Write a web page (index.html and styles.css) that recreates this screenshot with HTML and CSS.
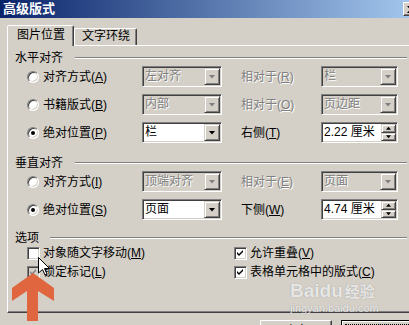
FILE: index.html
```html
<!DOCTYPE html>
<html lang="zh-CN">
<head>
    <meta charset="UTF-8">
    <meta name="viewport" content="width=device-width, initial-scale=1.0">
    <title>高级版式</title>
    <link rel="stylesheet" href="styles.css">
</head>
<body>
<div class="window">
    <div class="titlebar">
        <span class="title">高级版式</span>
        <span class="close-btn">
            <svg width="8" height="7" viewBox="0 0 8 7"><path d="M0 0h2l2 2 2-2h2L5 3.5 8 7H6L4 5 2 7H0l3-3.5z" fill="#000"/></svg>
        </span>
    </div>

    <div class="dialog">
        <div class="tabs">
            <div class="tab active">图片位置</div>
            <div class="tab">文字环绕</div>
        </div>

        <div class="panel">
            <!-- 水平对齐 -->
            <div class="group">
                <div class="group-head"><span>水平对齐</span><i class="etch"></i></div>
                <div class="pos-grid">
                    <label class="opt"><span class="radio"></span><span>对齐方式(<u>A</u>)</span></label>
                    <div class="combo combo-main disabled"><span class="val">左对齐</span><span class="drop"></span></div>
                    <span class="rel disabled">相对于(<u>R</u>)</span>
                    <div class="combo combo-rel disabled"><span class="val">栏</span><span class="drop"></span></div>

                    <label class="opt"><span class="radio"></span><span>书籍版式(<u>B</u>)</span></label>
                    <div class="combo combo-main disabled"><span class="val">内部</span><span class="drop"></span></div>
                    <span class="rel disabled">相对于(<u>O</u>)</span>
                    <div class="combo combo-rel disabled"><span class="val">页边距</span><span class="drop"></span></div>

                    <label class="opt"><span class="radio on"></span><span>绝对位置(<u>P</u>)</span></label>
                    <div class="combo combo-main"><span class="val">栏</span><span class="drop"></span></div>
                    <span class="rel">右侧(<u>T</u>)</span>
                    <div class="combo combo-rel"><span class="val">2.22 厘米</span><span class="spin"><i class="up"></i><i class="dn"></i></span></div>
                </div>
            </div>

            <!-- 垂直对齐 -->
            <div class="group group-v">
                <div class="group-head"><span>垂直对齐</span><i class="etch"></i></div>
                <div class="pos-grid">
                    <label class="opt"><span class="radio"></span><span>对齐方式(<u>I</u>)</span></label>
                    <div class="combo combo-main disabled"><span class="val">顶端对齐</span><span class="drop"></span></div>
                    <span class="rel disabled">相对于(<u>E</u>)</span>
                    <div class="combo combo-rel disabled"><span class="val">页面</span><span class="drop"></span></div>

                    <label class="opt"><span class="radio on"></span><span>绝对位置(<u>S</u>)</span></label>
                    <div class="combo combo-main"><span class="val">页面</span><span class="drop"></span></div>
                    <span class="rel">下侧(<u>W</u>)</span>
                    <div class="combo combo-rel"><span class="val">4.74 厘米</span><span class="spin"><i class="up"></i><i class="dn"></i></span></div>
                </div>
            </div>

            <!-- 选项 -->
            <div class="group group-o">
                <div class="group-head"><span>选项</span><i class="etch"></i></div>
                <div class="check-grid">
                    <label class="opt opt-c"><span class="check"></span><span>对象随文字移动(<u>M</u>)</span></label>
                    <label class="opt opt-c"><span class="check"><svg width="7" height="7" viewBox="0 0 7 7"><path d="M0 2l2 2 4-4v2L2 6 0 4z" fill="#000"/></svg></span><span>允许重叠(<u>V</u>)</span></label>
                    <label class="opt opt-c"><span class="check grey"><svg width="7" height="7" viewBox="0 0 7 7"><path d="M0 2l2 2 4-4v2L2 6 0 4z" fill="#808080"/></svg></span><span>锁定标记(<u>L</u>)</span></label>
                    <label class="opt opt-c"><span class="check"><svg width="7" height="7" viewBox="0 0 7 7"><path d="M0 2l2 2 4-4v2L2 6 0 4z" fill="#000"/></svg></span><span>表格单元格中的版式(<u>C</u>)</span></label>
                </div>
            </div>
        </div>

        <div class="buttons">
            <span class="btn">确定</span>
            <span class="btn default"><span class="focus">取消</span></span>
        </div>
    </div>

    <!-- 标注 -->
    <svg class="arrow-mark" width="42" height="48" viewBox="0 0 42 48">
        <polygon points="21,0 42,15 42,28 26,18 26,48 15,48 15,18 0,28 0,15" fill="#e0663f"/>
    </svg>
    <svg class="cursor" width="12" height="19" viewBox="0 0 12 19">
        <polygon points="0.5,0.5 0.5,16 4.5,12.5 7,18 9,17 6.5,11.5 11.5,11.5" fill="#fff" stroke="#000" stroke-width="1"/>
    </svg>
    <div class="watermark">
        <div class="wm-logo">Baidu<span class="wm-cn">经验</span></div>
        <div class="wm-url">jingyan.baidu.com</div>
    </div>
</div>
</body>
</html>
```

FILE: styles.css
```css
body {
    margin: 0;
    background: #d4d0c8;
    overflow: hidden;
    font-family: "Liberation Sans", "Noto Sans CJK SC", sans-serif;
    font-size: 12px;
    color: #000;
    text-autospace: no-autospace;
}
.window {
    position: relative;
    width: 421px;
    height: 325px;
    overflow: hidden;
}
.titlebar {
    display: flex;
    align-items: center;
    height: 18px;
    padding: 0 2px 0 3px;
    background: linear-gradient(to right, #0a246a, #a6caf0);
}
.title {
    color: #fff;
    font-weight: bold;
    font-size: 13px;
    line-height: 18px;
}
.close-btn {
    margin-left: auto;
    width: 16px;
    height: 14px;
    box-sizing: border-box;
    display: flex;
    align-items: center;
    justify-content: center;
    background: #d4d0c8;
    border: 1px solid;
    border-color: #fff #404040 #404040 #fff;
    box-shadow: inset -1px -1px 0 #808080;
}
.dialog {
    padding: 7px 8px 0 7px;
}
.tabs {
    display: flex;
    align-items: flex-end;
    height: 20px;
}
.tab {
    box-sizing: border-box;
    height: 17px;
    padding: 0 6px 0 7px;
    line-height: 15px;
    border: 1px solid;
    border-bottom: none;
    border-color: #fff #404040 transparent #fff;
    box-shadow: inset -1px 0 0 #808080;
    border-radius: 2px 2px 0 0;
}
.tab.active {
    height: 21px;
    margin-bottom: -1px;
    padding: 0 8px 0 9px;
    line-height: 19px;
    position: relative;
    z-index: 1;
    background: #d4d0c8;
}
.panel {
    box-sizing: border-box;
    height: 268px;
    padding: 5px 5px 0 7px;
    border-top: 1px solid #fff;
    border-left: 1px solid #fff;
    border-right: 1px solid #404040;
    border-bottom: 1px solid #404040;
    box-shadow: inset 0 -1px 0 #808080, inset -1px 0 0 #808080;
}
.group-head {
    display: flex;
    align-items: center;
    height: 14px;
    line-height: 14px;
}
.etch {
    flex: 1;
    height: 0;
    margin-left: 12px;
    border-top: 1px solid #808080;
    border-bottom: 1px solid #fff;
}
.group-v {
    margin-top: 13px;
}
.group-o {
    margin-top: 11px;
}
.group-o .etch {
    margin-left: 11px;
}
.pos-grid {
    display: grid;
    grid-template-columns: 115px 99px 80px 77px;
    grid-auto-rows: 21px;
    row-gap: 7px;
    margin-top: 1px;
    padding-left: 12px;
    align-items: center;
}
.check-grid {
    display: grid;
    grid-template-columns: 207px auto;
    grid-auto-rows: 16px;
    row-gap: 3px;
    padding-left: 12px;
    align-items: center;
}
.opt {
    display: flex;
    align-items: center;
    gap: 4px;
    line-height: 14px;
    white-space: nowrap;
}
.opt-c {
    gap: 3px;
}
.rel {
    line-height: 14px;
    white-space: nowrap;
}
.disabled {
    color: #808080;
    text-shadow: 1px 1px 0 #fff;
}
.radio {
    box-sizing: border-box;
    width: 12px;
    height: 12px;
    border-radius: 50%;
    background: #fff;
    border: 1px solid;
    border-color: #808080 #fff #fff #808080;
    box-shadow: inset 1px 1px 0 #404040, inset -1px -1px 0 #d4d0c8;
    display: flex;
    align-items: center;
    justify-content: center;
}
.radio.on::after {
    content: "";
    width: 4px;
    height: 4px;
    border-radius: 50%;
    background: #000;
}
.check {
    box-sizing: border-box;
    width: 13px;
    height: 13px;
    background: #fff;
    border: 1px solid;
    border-color: #808080 #fff #fff #808080;
    box-shadow: inset 1px 1px 0 #404040, inset -1px -1px 0 #d4d0c8;
    display: flex;
    align-items: center;
    justify-content: center;
}
.check.grey {
    background: #d4d0c8;
}
.combo {
    box-sizing: border-box;
    display: flex;
    height: 21px;
    padding: 1px;
    background: #fff;
    border: 1px solid;
    border-color: #808080 #fff #fff #808080;
    box-shadow: inset 1px 1px 0 #404040, inset -1px -1px 0 #d4d0c8;
}
.combo.disabled {
    background: #d4d0c8;
}
.combo-main {
    width: 80px;
}
.combo-rel {
    width: 77px;
}
.val {
    flex: 1;
    padding-left: 1px;
    line-height: 17px;
    white-space: nowrap;
    overflow: hidden;
}
.drop,
.spin i {
    box-sizing: border-box;
    background: #d4d0c8;
    border: 1px solid;
    border-color: #d4d0c8 #404040 #404040 #d4d0c8;
    box-shadow: inset 1px 1px 0 #fff, inset -1px -1px 0 #808080;
    display: flex;
    align-items: center;
    justify-content: center;
}
.drop {
    width: 16px;
}
.drop::after {
    content: "";
    width: 7px;
    height: 4px;
    background: #000;
    clip-path: polygon(0 0, 100% 0, 50% 100%);
}
.disabled .drop::after {
    background: #808080;
}
.spin {
    display: flex;
    flex-direction: column;
    width: 15px;
}
.spin i {
    flex: 1;
}
.spin i::after {
    content: "";
    width: 5px;
    height: 3px;
    background: #000;
}
.spin .up::after {
    clip-path: polygon(50% 0, 100% 100%, 0 100%);
}
.spin .dn::after {
    clip-path: polygon(0 0, 100% 0, 50% 100%);
}
.buttons {
    display: flex;
    justify-content: flex-end;
    gap: 9px;
    margin-top: 7px;
}
.btn {
    box-sizing: border-box;
    width: 72px;
    height: 23px;
    text-align: center;
    line-height: 21px;
    border: 1px solid;
    border-color: #fff #404040 #404040 #fff;
    box-shadow: inset -1px -1px 0 #808080;
}
.btn.default {
    border: 1px solid #000;
    padding: 3px;
    line-height: 13px;
    box-shadow: inset 1px 1px 0 #fff, inset -1px -1px 0 #404040, inset -2px -2px 0 #808080;
}
.focus {
    display: block;
    border: 1px dotted #000;
}
.arrow-mark {
    position: absolute;
    left: 12px;
    top: 273px;
}
.cursor {
    position: absolute;
    left: 38px;
    top: 257px;
}
.watermark {
    position: absolute;
    left: 290px;
    top: 280px;
    color: rgba(255, 255, 255, 0.8);
    text-shadow: 0 0 1px rgba(110, 110, 110, 0.7);
}
.wm-logo {
    font-weight: bold;
    font-size: 19px;
    line-height: 22px;
}
.wm-cn {
    font-family: "Noto Sans CJK SC", sans-serif;
    font-size: 15px;
    margin-left: 2px;
}
.wm-url {
    font-size: 11px;
    line-height: 12px;
}
```
